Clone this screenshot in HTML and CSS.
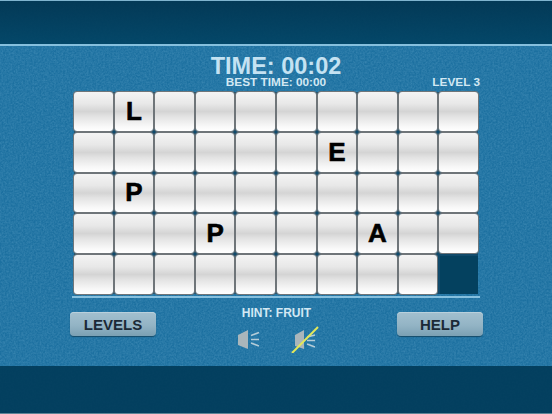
FILE: index.html
```html
<!DOCTYPE html>
<html lang="en">
<head>
<meta charset="utf-8">
<title>Word puzzle</title>
<link rel="stylesheet" href="styles.css">
</head>
<body>
<div class="screen">
  <svg class="noise" width="552" height="414" aria-hidden="true">
    <filter id="grain"><feTurbulence type="fractalNoise" baseFrequency="0.55" numOctaves="3" seed="4"/><feColorMatrix values="0 0 0 0 0.35  0 0 0 0 0.65  0 0 0 0 0.85  0.9 0 0 0 -0.22"/></filter>
    <rect width="552" height="414" filter="url(#grain)"/>
  </svg>
  <header class="band band-top"></header>
  <main class="board">
    <h1 class="time">TIME: 00:02</h1>
    <div class="stats">
      <span class="stat-side"></span>
      <span class="best">BEST TIME: 00:00</span>
      <span class="stat-side level">LEVEL 3</span>
    </div>
    <div class="grid">
      <div class="cell"></div><div class="cell">L</div><div class="cell"></div><div class="cell"></div><div class="cell"></div><div class="cell"></div><div class="cell"></div><div class="cell"></div><div class="cell"></div><div class="cell"></div>
      <div class="cell"></div><div class="cell"></div><div class="cell"></div><div class="cell"></div><div class="cell"></div><div class="cell"></div><div class="cell">E</div><div class="cell"></div><div class="cell"></div><div class="cell"></div>
      <div class="cell"></div><div class="cell">P</div><div class="cell"></div><div class="cell"></div><div class="cell"></div><div class="cell"></div><div class="cell"></div><div class="cell"></div><div class="cell"></div><div class="cell"></div>
      <div class="cell"></div><div class="cell"></div><div class="cell"></div><div class="cell">P</div><div class="cell"></div><div class="cell"></div><div class="cell"></div><div class="cell">A</div><div class="cell"></div><div class="cell"></div>
      <div class="cell"></div><div class="cell"></div><div class="cell"></div><div class="cell"></div><div class="cell"></div><div class="cell"></div><div class="cell"></div><div class="cell"></div><div class="cell"></div><div class="hole"></div>
    </div>
    <div class="rule"></div>
    <div class="controls">
      <button class="btn">LEVELS</button>
      <div class="center">
        <div class="hint">HINT: FRUIT</div>
        <div class="sounds">
          <svg class="icon" width="24" height="24" viewBox="0 0 24 24">
            <polygon class="cone" points="1,8 11,3 11,22 1,18"/>
            <path class="rays" d="M14 8.5 L22 5.5 M14 12.5 L22 12.5 M14 16 L22 19"/>
          </svg>
          <svg class="icon icon-muted" width="28" height="28" viewBox="0 0 28 28">
            <polygon class="cone" points="4,10 13,5 13,24 4,21"/>
            <path class="rays" d="M16 12 L24 10 M16 15.5 L24 15.5 M16 19 L24 22"/>
            <path class="mute" d="M1 28 L27 2"/>
          </svg>
        </div>
      </div>
      <button class="btn">HELP</button>
    </div>
  </main>
  <footer class="band band-bottom"></footer>
</div>
</body>
</html>
```
FILE: styles.css
```css
* { box-sizing: border-box; margin: 0; padding: 0; }
html, body { width: 552px; height: 414px; overflow: hidden; }
body { font-family: "Liberation Sans", Arial, sans-serif; background: #1f6f9c; }
.screen { position: relative; width: 552px; height: 414px; display: flex; flex-direction: column; background: #1c70a0; }
.noise { position: absolute; left: 0; top: 0; opacity: .34; pointer-events: none; z-index: 2; }
.band { flex: none; position: relative; z-index: 3; background: rgba(0, 58, 88, .9); }
.band-top { height: 46px; border-top: 1px solid #7fb4cf; border-bottom: 2px solid #86c0de; background: linear-gradient(rgba(0, 52, 80, .92), rgba(0, 66, 98, .9)); }
.band-bottom { height: 48px; border-bottom: 1px solid #5d8496; }
.board { flex: 1; display: flex; flex-direction: column; align-items: center; }
.time { font-size: 23.5px; line-height: 20px; font-weight: 700; color: #c4e2f2; margin-top: 10px; position: relative; z-index: 3; }
.stats { width: 408px; display: flex; justify-content: space-between; font-size: 11.8px; line-height: 11px; font-weight: 700; color: #d3e8f3; margin-top: 1px; position: relative; z-index: 3; }
.stat-side { width: 60px; text-align: right; }
.grid { width: 404px; height: 202px; margin-top: 4px; display: grid; grid-template-columns: repeat(10, 1fr); grid-template-rows: repeat(5, 1fr); gap: 2px; background: #104a6b; position: relative; z-index: 3; }
.cell { border-radius: 3px; display: flex; align-items: center; justify-content: center; font-size: 26px; font-weight: 700; -webkit-text-stroke: .6px #000; color: #000; background: linear-gradient(#f4f4f4 0%, #e8e8e8 30%, #d4d4d4 50%, #e2e2e2 62%, #f8f8f8 88%, #ffffff 100%); box-shadow: 0 0 0 1px #6f7579; }
.hole { background: #04415f; margin: 1px 0 0 1px; }
.rule { width: 408px; height: 2px; margin-top: 2px; background: #86c0de; position: relative; z-index: 3; }
.controls { width: 413px; margin-top: 14px; margin-left: 1px; display: flex; justify-content: space-between; align-items: flex-start; position: relative; z-index: 3; }
.btn { width: 86px; height: 24px; border: none; border-radius: 4px; font: 700 15px "Liberation Sans", Arial, sans-serif; color: #1b2a37; background: linear-gradient(#a3c0cf, #93b4c5 55%, #7ba0b3); box-shadow: 0 1px 1px #164c6a, inset 0 1px 0 #b9d0dc; }
.center { display: flex; flex-direction: column; align-items: center; margin-top: -5px; }
.hint { font-size: 12px; line-height: 12px; font-weight: 700; color: #d3e8f3; }
.sounds { display: flex; align-items: flex-start; gap: 30px; margin-top: 6px; margin-left: 3px; }
.icon { display: block; margin-top: 2px; }
.icon-muted { margin-top: 0; }
.cone { fill: #aab6bb; }
.rays { stroke: #b4ccd8; stroke-width: 1.5; fill: none; }
.mute { stroke: #e3e85a; stroke-width: 2; fill: none; }
```
